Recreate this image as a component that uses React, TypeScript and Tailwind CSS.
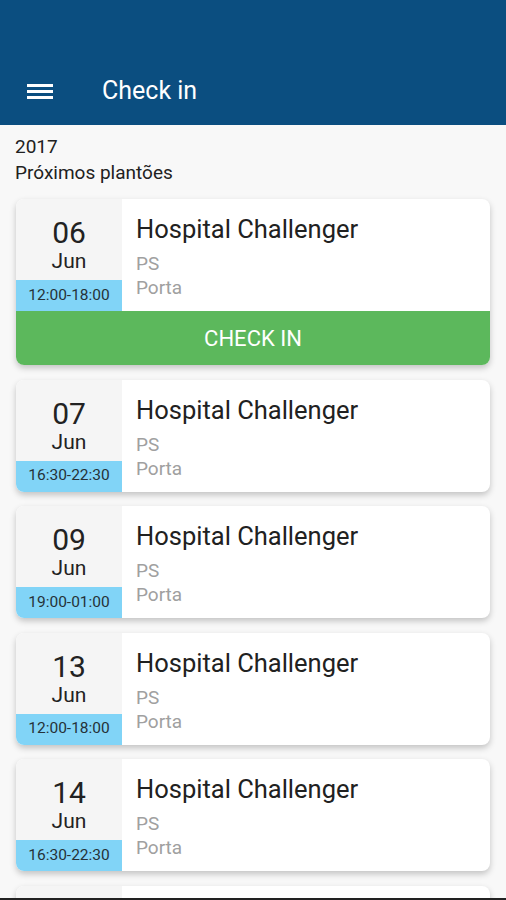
import React from "react";

interface Shift {
  day: string;
  month: string;
  time: string;
  checkIn?: boolean;
}

const shifts: Shift[] = [
  { day: "06", month: "Jun", time: "12:00-18:00", checkIn: true },
  { day: "07", month: "Jun", time: "16:30-22:30" },
  { day: "09", month: "Jun", time: "19:00-01:00" },
  { day: "13", month: "Jun", time: "12:00-18:00" },
  { day: "14", month: "Jun", time: "16:30-22:30" },
  { day: "15", month: "Jun", time: "12:00-18:00" },
];

function ShiftCard({ shift }: { shift: Shift }) {
  return (
    <div className="mx-4 overflow-hidden rounded-lg bg-white shadow-[0_3px_6px_rgba(0,0,0,0.22)]">
      <div className="flex h-[112px]">
        {/* Date column */}
        <div className="flex w-[106px] shrink-0 flex-col bg-[#f5f5f5]">
          <div className="pt-[17px] text-center text-[30px] leading-[34px] text-[#222]">{shift.day}</div>
          <div className="text-center text-[21px] leading-[22px] text-[#222]">{shift.month}</div>
          <div className="mt-auto flex h-[31px] items-center justify-center bg-[#81d4f7] text-[15.5px] text-[#263238]">
            {shift.time}
          </div>
        </div>

        {/* Info */}
        <div className="flex flex-col pl-[14px] pt-[15px]">
          <div className="text-[25.5px] leading-[30px] text-[#212121]">Hospital Challenger</div>
          <div className="mt-[8px] text-[19px] leading-[24px] text-[#a0a0a0]">PS</div>
          <div className="text-[19px] leading-[24px] text-[#a0a0a0]">Porta</div>
        </div>
      </div>

      {shift.checkIn && (
        <div className="flex h-[54px] items-center justify-center bg-[#5cb85c] text-[22px] text-white">
          CHECK IN
        </div>
      )}
    </div>
  );
}

export default function App() {
  return (
    <div
      className="relative h-[900px] w-[506px] overflow-hidden bg-[#f8f8f8]"
      style={{ fontFamily: "Roboto, 'Liberation Sans', sans-serif" }}
    >
      {/* Header */}
      <header className="flex h-[125px] items-end bg-[#0b4e80] pb-[19px]">
        <div className="flex h-[30px] items-center">
          <div className="ml-[27px] flex w-[26px] flex-col gap-[3px]">
            <span className="h-[3px] w-full bg-white" />
            <span className="h-[3px] w-full bg-white" />
            <span className="h-[3px] w-full bg-white" />
          </div>
          <span className="ml-[49px] text-[25px] text-white">Check in</span>
        </div>
      </header>

      {/* Section title */}
      <div className="px-[15px] pt-[9px] text-[19px] leading-[26px] text-[#212121]">
        <div>2017</div>
        <div>Próximos plantões</div>
      </div>

      {/* Cards */}
      <div className="mt-[13px] flex flex-col gap-[14.5px]">
        {shifts.map((s) => (
          <ShiftCard key={s.day} shift={s} />
        ))}
      </div>

      <div className="absolute bottom-0 left-0 h-[2px] w-full bg-[#222]" />
    </div>
  );
}
